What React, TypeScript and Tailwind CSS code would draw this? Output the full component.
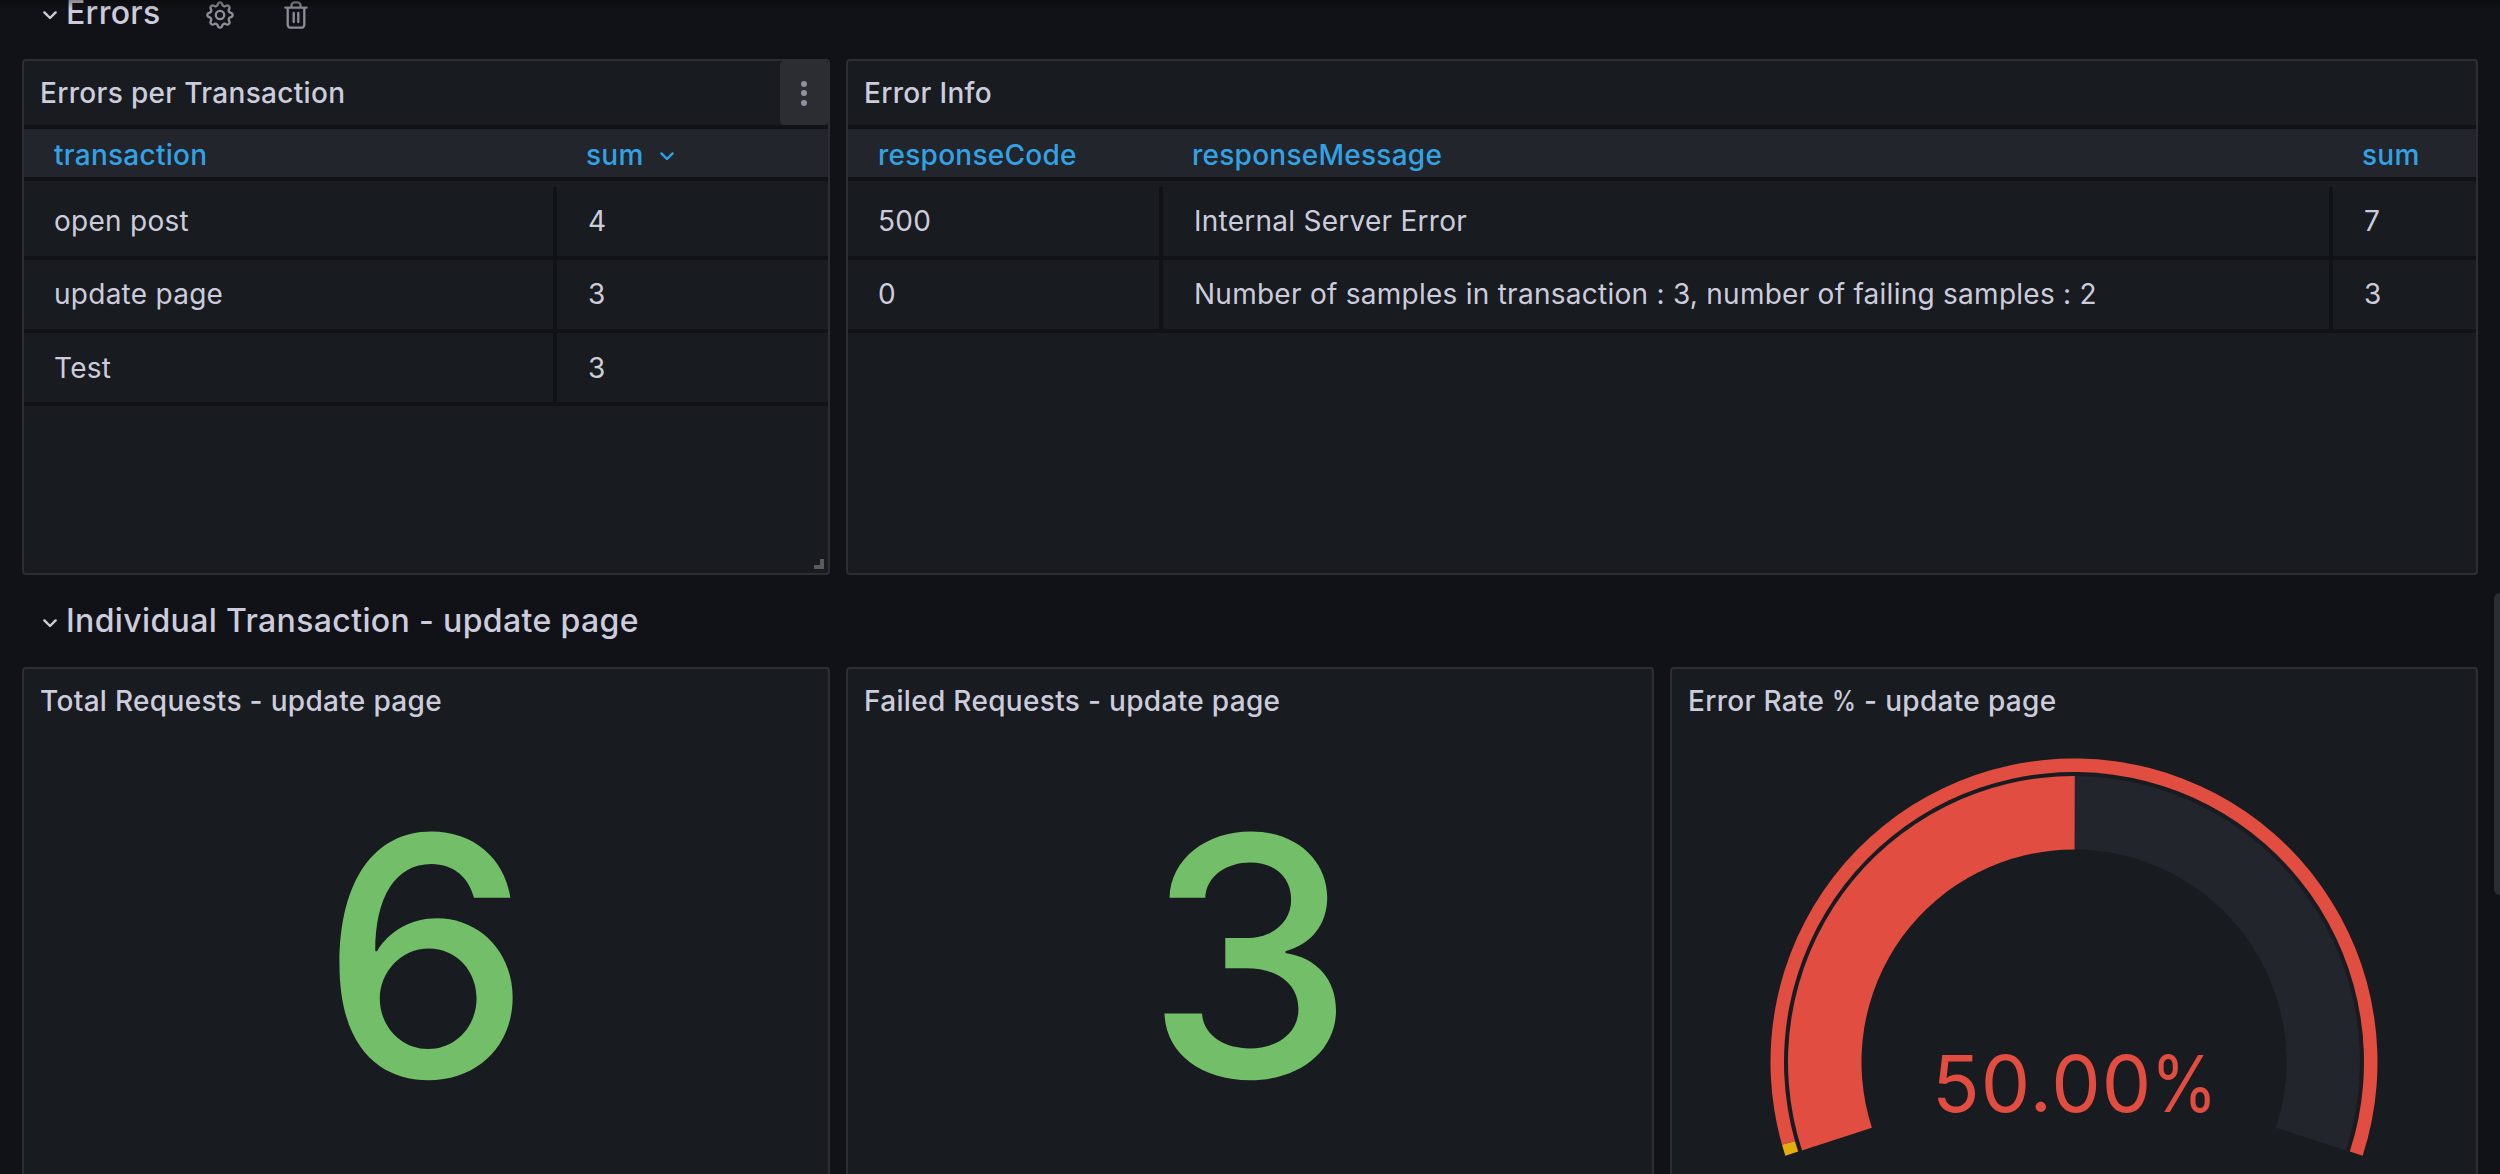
import type { ReactNode } from "react";

const font = "font-['Inter','Liberation_Sans',sans-serif]";

function Chevron({ className }: { className: string }) {
  return (
    <svg viewBox="0 0 14 9" className={className} fill="none" stroke="currentColor" strokeWidth="2.4" strokeLinecap="round" strokeLinejoin="round">
      <path d="M1.4 1.4 7 7l5.6-5.6" />
    </svg>
  );
}

function Gear() {
  const pts: string[] = [];
  for (let i = 0; i <= 96; i++) {
    const a = (i / 96) * Math.PI * 2;
    const c = Math.cos(a * 8);
    const r = 11.1 + 1.5 * Math.sign(c) * Math.pow(Math.abs(c), 0.55);
    pts.push(`${(14 + r * Math.sin(a)).toFixed(2)} ${(14 - r * Math.cos(a)).toFixed(2)}`);
  }
  return (
    <svg viewBox="0 0 28 28" className="size-7" fill="none" stroke="currentColor" strokeWidth="2.3" strokeLinejoin="round">
      <path d={`M${pts.join("L")}Z`} />
      <circle cx="14" cy="14" r="4.2" />
    </svg>
  );
}

function Trash() {
  return (
    <svg viewBox="0 0 24 28" className="h-7 w-6" fill="none" stroke="currentColor" strokeWidth="2.3" strokeLinecap="round" strokeLinejoin="round">
      <path d="M1.3 6.6h21.4M3.7 6.6v17.1a3 3 0 0 0 3 3h10.6a3 3 0 0 0 3-3V6.6M7.5 6.3V4.4a3 3 0 0 1 3-3h3a3 3 0 0 1 3 3v1.9M9.7 12v9M14.3 12v9" />
    </svg>
  );
}

function Panel({ title, className = "", menu, children }: { title: ReactNode; className?: string; menu?: ReactNode; children: ReactNode }) {
  return (
    <section className={`relative flex flex-col rounded-[4px] border-2 border-[#2d2e33] bg-[#181b1f] ${className}`}>
      <header className="flex h-16 shrink-0 items-center justify-between pl-4">
        <h2 className="text-[28px] leading-[42px] font-medium tracking-[0.32px] whitespace-nowrap">{title}</h2>
        {menu}
      </header>
      {children}
    </section>
  );
}

function Table({ cols, head, rows }: { cols: string; head: ReactNode[]; rows: string[][] }) {
  return (
    <div className="text-[28px] leading-[42px] tracking-[0.26px]">
      <div className={`grid h-14 border-y-4 border-[#111217] bg-[#22252b] font-medium text-[#33a2e5] ${cols}`}>
        {head.map((h, i) => (
          <div key={i} className="flex items-center pt-[3px] pl-[29px] first:pl-[30px]">{h}</div>
        ))}
      </div>
      <div className="pt-1.5">
        {rows.map((row) => (
          <div key={row[0]} className={`group grid h-[73px] border-b-4 border-[#111217] ${cols}`}>
            {row.map((cell, i) => (
              <div key={i} className="flex items-center border-r-4 border-[#111217] pb-px pl-[31px] whitespace-nowrap group-nth-3:pt-px group-nth-3:pb-0 first:pl-[30px] last:border-r-0">{cell}</div>
            ))}
          </div>
        ))}
      </div>
    </div>
  );
}

const polar = (r: number, deg: number) => {
  const a = (deg * Math.PI) / 180;
  return `${(304 + r * Math.cos(a)).toFixed(2)} ${(304 - r * Math.sin(a)).toFixed(2)}`;
};

function band(outer: number, inner: number, from: number, to: number) {
  const large = from - to > 180 ? 1 : 0;
  return `M${polar(outer, from)}A${outer} ${outer} 0 ${large} 1 ${polar(outer, to)}L${polar(inner, to)}A${inner} ${inner} 0 ${large} 0 ${polar(inner, from)}Z`;
}

function Gauge() {
  return (
    <div className="relative mt-[25px] ml-[98px] h-[416px] w-[608px]">
      <svg viewBox="0 0 608 416" className="h-[416px] w-[608px]">
        <path d={band(286, 212.5, 90, -18)} fill="#22252b" />
        <path d={band(286, 212.5, 198, 89.85)} fill="#e24d42" />
        <path d={band(303.5, 290, 195.84, -18)} fill="#e24d42" />
        <path d={band(303.5, 290, 198, 195.84)} fill="#e5ac0e" />
      </svg>
      <div className="absolute top-[278px] left-[162px] flex text-[78.5px] leading-[96px] tracking-[1.1px] text-[#e24d42]">
        50.00<span className="-ml-[1.5px] origin-left scale-x-[0.86]">%</span>
      </div>
    </div>
  );
}

function BigNumber({ value }: { value: string }) {
  return (
    <div className="flex grow items-center justify-center pb-[70px] text-[333px] leading-none font-medium text-[#73bf69]">{value}</div>
  );
}

export default function App() {
  return (
    <main className={`relative h-[1174px] w-[2500px] overflow-hidden bg-[#111217] px-[22px] text-[#ccccdc] ${font}`}>
      <div className="absolute inset-x-0 top-0 z-10 h-2.5 bg-gradient-to-b from-black/35 to-transparent" />
      <div className="flex h-[59px] items-start">
        <Chevron className="mt-[11px] ml-[21px] h-[9px] w-[14px]" />
        <h1 className="-mt-[11px] ml-[9px] text-[32px] leading-[48px] font-medium tracking-[0.3px]">Errors</h1>
        <div className="mt-px ml-[45px] text-[#8e8e99]"><Gear /></div>
        <div className="mt-px ml-[50px] text-[#8e8e99]"><Trash /></div>
      </div>

      <div className="flex gap-4">
        <Panel
          title="Errors per Transaction"
          className="h-[516px] w-[808px]"
          menu={
            <div className="flex h-16 w-12 flex-col items-center justify-center gap-[3.5px] rounded-[4px] bg-[#2c2d32]">
              <i className="size-[6px] rounded-full bg-[#9090a0]" />
              <i className="size-[6px] rounded-full bg-[#9090a0]" />
              <i className="size-[6px] rounded-full bg-[#9090a0]" />
            </div>
          }
        >
          <Table
            cols="grid-cols-[533px_1fr]"
            head={["transaction", <span key="s" className="flex items-center">sum<Chevron className="mt-1 ml-4 h-[9px] w-[14px]" /></span>]}
            rows={[["open post", "4"], ["update page", "3"], ["Test", "3"]]}
          />
          <div className="absolute right-1 bottom-1 size-[10px] border-r-4 border-b-4 border-[#5b5b5c]" />
        </Panel>
        <Panel title="Error Info" className="h-[516px] w-[1632px]">
          <Table
            cols="grid-cols-[315px_1170px_1fr]"
            head={["responseCode", "responseMessage", "sum"]}
            rows={[
              ["500", "Internal Server Error", "7"],
              ["0", "Number of samples in transaction : 3, number of failing samples : 2", "3"],
            ]}
          />
        </Panel>
      </div>

      <div className="flex h-[92px] items-center">
        <Chevron className="mt-1 ml-[21px] h-[9px] w-[14px]" />
        <h1 className="ml-[9px] text-[32px] leading-[48px] font-medium tracking-[0.36px]">Individual Transaction - update page</h1>
      </div>

      <div className="flex gap-4">
        <Panel title="Total Requests - update page" className="h-[583px] w-[808px]"><BigNumber value="6" /></Panel>
        <Panel title="Failed Requests - update page" className="h-[583px] w-[808px]"><BigNumber value="3" /></Panel>
        <Panel
          title={<>Error Rate <span className="-mr-1 inline-block origin-left scale-x-[0.86]">%</span> - update page</>}
          className="h-[583px] w-[808px]"
        >
          <Gauge />
        </Panel>
      </div>
      <div className="absolute top-[593px] right-0 h-[302px] w-[6px] rounded-l-[6px] bg-[#2c2d32]" />
    </main>
  );
}
